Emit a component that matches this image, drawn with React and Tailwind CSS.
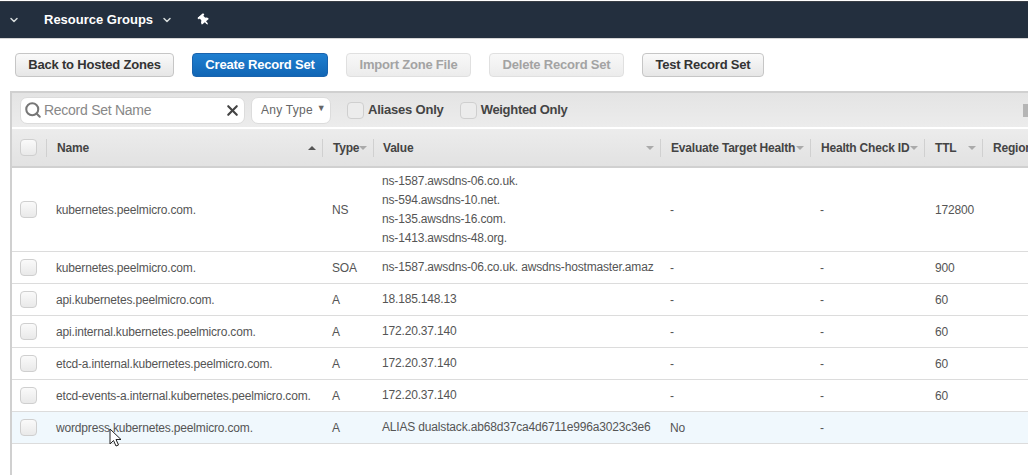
import React from "react";
import { ChevronDown, Search, X } from "lucide-react";
import { FaThumbtack } from "react-icons/fa";

const rows = [
    { name: "kubernetes.peelmicro.com.", type: "NS", value: ["ns-1587.awsdns-06.co.uk.", "ns-594.awsdns-10.net.", "ns-135.awsdns-16.com.", "ns-1413.awsdns-48.org."], target: "-", health: "-", ttl: "172800" },
    { name: "kubernetes.peelmicro.com.", type: "SOA", value: ["ns-1587.awsdns-06.co.uk. awsdns-hostmaster.amaz"], target: "-", health: "-", ttl: "900" },
    { name: "api.kubernetes.peelmicro.com.", type: "A", value: ["18.185.148.13"], target: "-", health: "-", ttl: "60" },
    { name: "api.internal.kubernetes.peelmicro.com.", type: "A", value: ["172.20.37.140"], target: "-", health: "-", ttl: "60" },
    { name: "etcd-a.internal.kubernetes.peelmicro.com.", type: "A", value: ["172.20.37.140"], target: "-", health: "-", ttl: "60" },
    { name: "etcd-events-a.internal.kubernetes.peelmicro.com.", type: "A", value: ["172.20.37.140"], target: "-", health: "-", ttl: "60" },
    { name: "wordpress.kubernetes.peelmicro.com.", type: "A", value: ["ALIAS dualstack.ab68d37ca4d6711e996a3023c3e6"], target: "No", health: "-", ttl: "", hover: true },
];

const Checkbox = () => (
    <span className="block w-[17px] h-[17px] shrink-0 rounded-[4px] border border-[#cfcfcf] bg-gradient-to-b from-[#fafafa] to-[#e9e9e9]" />
);

const ToolbarButton = ({ label, width, disabled, primary }) => {
    let color = "border-[#c6c6c6] bg-gradient-to-b from-[#fafafa] to-[#e6e6e6] text-[#333]";
    if (primary) color = "border-[#1a63ad] bg-gradient-to-b from-[#1f7fd0] to-[#1166b5] text-white";
    if (disabled) color = "border-[#e0e0e0] bg-gradient-to-b from-[#f8f8f8] to-[#ececec] text-[#a3a3a3]";
    return (
        <button className={`${width} h-6 pb-[2px] rounded-[4px] border text-[13px] font-bold leading-none tracking-[-0.2px] whitespace-nowrap ${color}`}>
            {label}
        </button>
    );
};

const HeaderCell = ({ label, width, caret, up }) => (
    <div className={`${width} shrink-0 h-full flex items-center justify-between pl-[10px]`}>
        <span className="whitespace-nowrap text-[12px] font-bold tracking-[-0.2px] text-[#444]">{label}</span>
        {caret && (
            <span className="flex items-center gap-[6px] shrink-0">
                <span className={`w-0 h-0 border-x-[4px] border-x-transparent ${up ? "border-b-[4px] border-b-[#555]" : "border-t-[4px] border-t-[#aaa]"}`} />
                <span className="w-px h-[18px] bg-[#d0d0d0]" />
            </span>
        )}
    </div>
);

const App = () => {
    return (
        <div className="relative w-[1028px] h-[476px] overflow-hidden bg-white font-['Liberation_Sans',Arial,sans-serif] text-[12px] text-[#444]">
            <div className="mt-[1px] h-[37px] bg-[#232f3e] border-t border-[#3a3f46] flex items-center text-white">
                <ChevronDown size={12} strokeWidth={3} className="ml-[8px] text-[#d5dbdb]" />
                <span className="ml-[24px] text-[13px] font-bold whitespace-nowrap">Resource Groups</span>
                <ChevronDown size={12} strokeWidth={3} className="ml-[8px] text-[#d5dbdb]" />
                <FaThumbtack size={12} className="ml-[25px] rotate-[-40deg]" />
            </div>

            <div className="h-[53px] pl-[15px] pt-[14px] flex items-start gap-[18px] border-t border-[#d5d5d5]">
                <ToolbarButton label="Back to Hosted Zones" width="w-[159px]" />
                <ToolbarButton label="Create Record Set" width="w-[136px]" primary />
                <ToolbarButton label="Import Zone File" width="w-[125px]" disabled />
                <ToolbarButton label="Delete Record Set" width="w-[135px]" disabled />
                <ToolbarButton label="Test Record Set" width="w-[122px]" />
            </div>

            <div className="ml-[10px] min-h-[384px] border-l-2 border-[#d0d0d0]">
                <div className="h-[38px] border-t-2 border-[#d0d0d0] border-b-2 border-b-white bg-gradient-to-b from-[#e4e4e4] to-[#ececec] flex items-center pl-[8px] relative">
                    <div className="w-[225px] h-[27px] rounded-[7px] bg-white border border-[#dcdcdc] flex items-center pl-[3px] pr-[3px]">
                        <Search size={18} strokeWidth={2.75} className="text-[#777] shrink-0" />
                        <span className="ml-[2px] text-[14px] tracking-[-0.27px] text-[#888] whitespace-nowrap">Record Set Name</span>
                        <X size={17} strokeWidth={3} className="ml-auto text-[#444]" />
                    </div>
                    <div className="ml-[6px] w-[80px] h-[27px] rounded-[7px] bg-white border border-[#dcdcdc] flex items-center justify-between pl-[9px] pr-[4px] text-[12px] tracking-[0.25px] text-[#666]">
                        <span className="whitespace-nowrap">Any Type</span>
                        <span className="text-[9px] mb-[2px]">▼</span>
                    </div>
                    <div className="ml-[16px] w-[17px] h-[17px] rounded-[4px] border border-[#cfcfcf] bg-[#ececec]" />
                    <span className="ml-[4px] text-[13px] font-bold tracking-[-0.2px] text-[#444] whitespace-nowrap">Aliases Only</span>
                    <div className="ml-[16px] w-[17px] h-[17px] rounded-[4px] border border-[#cfcfcf] bg-[#ececec]" />
                    <span className="ml-[4px] text-[13px] font-bold tracking-[-0.3px] text-[#444] whitespace-nowrap">Weighted Only</span>
                    <span className="absolute right-0 top-[11px] w-[5px] h-[13px] bg-[#b5b5b5]" />
                </div>

                <div className="h-[39px] border-b-2 border-[#d0d0d0] bg-gradient-to-b from-[#ececec] to-[#e2e2e2] flex items-center">
                    <div className="w-[35px] shrink-0 h-full flex items-center justify-between pl-[8px]">
                        <Checkbox />
                        <span className="w-px h-[18px] bg-[#d0d0d0]" />
                    </div>
                    <HeaderCell label="Name" width="w-[276px]" caret up />
                    <HeaderCell label="Type" width="w-[50px]" caret />
                    <HeaderCell label="Value" width="w-[288px]" caret />
                    <HeaderCell label="Evaluate Target Health" width="w-[150px]" caret />
                    <HeaderCell label="Health Check ID" width="w-[114px]" caret />
                    <HeaderCell label="TTL" width="w-[58px]" caret />
                    <HeaderCell label="Region" width="w-[45px]" />
                </div>

                {rows.map((row, i) => (
                    <div
                        key={i}
                        className={`flex items-center border-b border-[#dcdcdc] text-[12px] tracking-[-0.17px] text-[#555] ${row.value.length > 1 ? "h-[84px]" : "h-[32px]"} ${row.hover ? "bg-[#f0f8fd]" : ""}`}
                    >
                        <div className="w-[35px] shrink-0 pl-[8px]"><Checkbox /></div>
                        <div className="w-[276px] shrink-0 pl-[9px] whitespace-nowrap">{row.name}</div>
                        <div className="w-[50px] shrink-0 pl-[9px]">{row.type}</div>
                        <div className="w-[288px] shrink-0 pl-[9px] whitespace-nowrap leading-[19px]">
                            {row.value.map((line) => (
                                <div key={line}>{line}</div>
                            ))}
                        </div>
                        <div className="w-[150px] shrink-0 pl-[9px]">{row.target}</div>
                        <div className="w-[114px] shrink-0 pl-[9px]">{row.health}</div>
                        <div className="w-[58px] shrink-0 pl-[10px]">{row.ttl}</div>
                    </div>
                ))}
            </div>

            <svg className="absolute left-[109px] top-[428px]" width="13" height="20" viewBox="0 0 13 20">
                <path d="M1 1 L1 16 L4.5 12.5 L7 18 L9.5 17 L7 11.5 L12 11.5 Z" fill="#fff" stroke="#222" strokeWidth="1" />
            </svg>
        </div>
    );
};

export default App;
